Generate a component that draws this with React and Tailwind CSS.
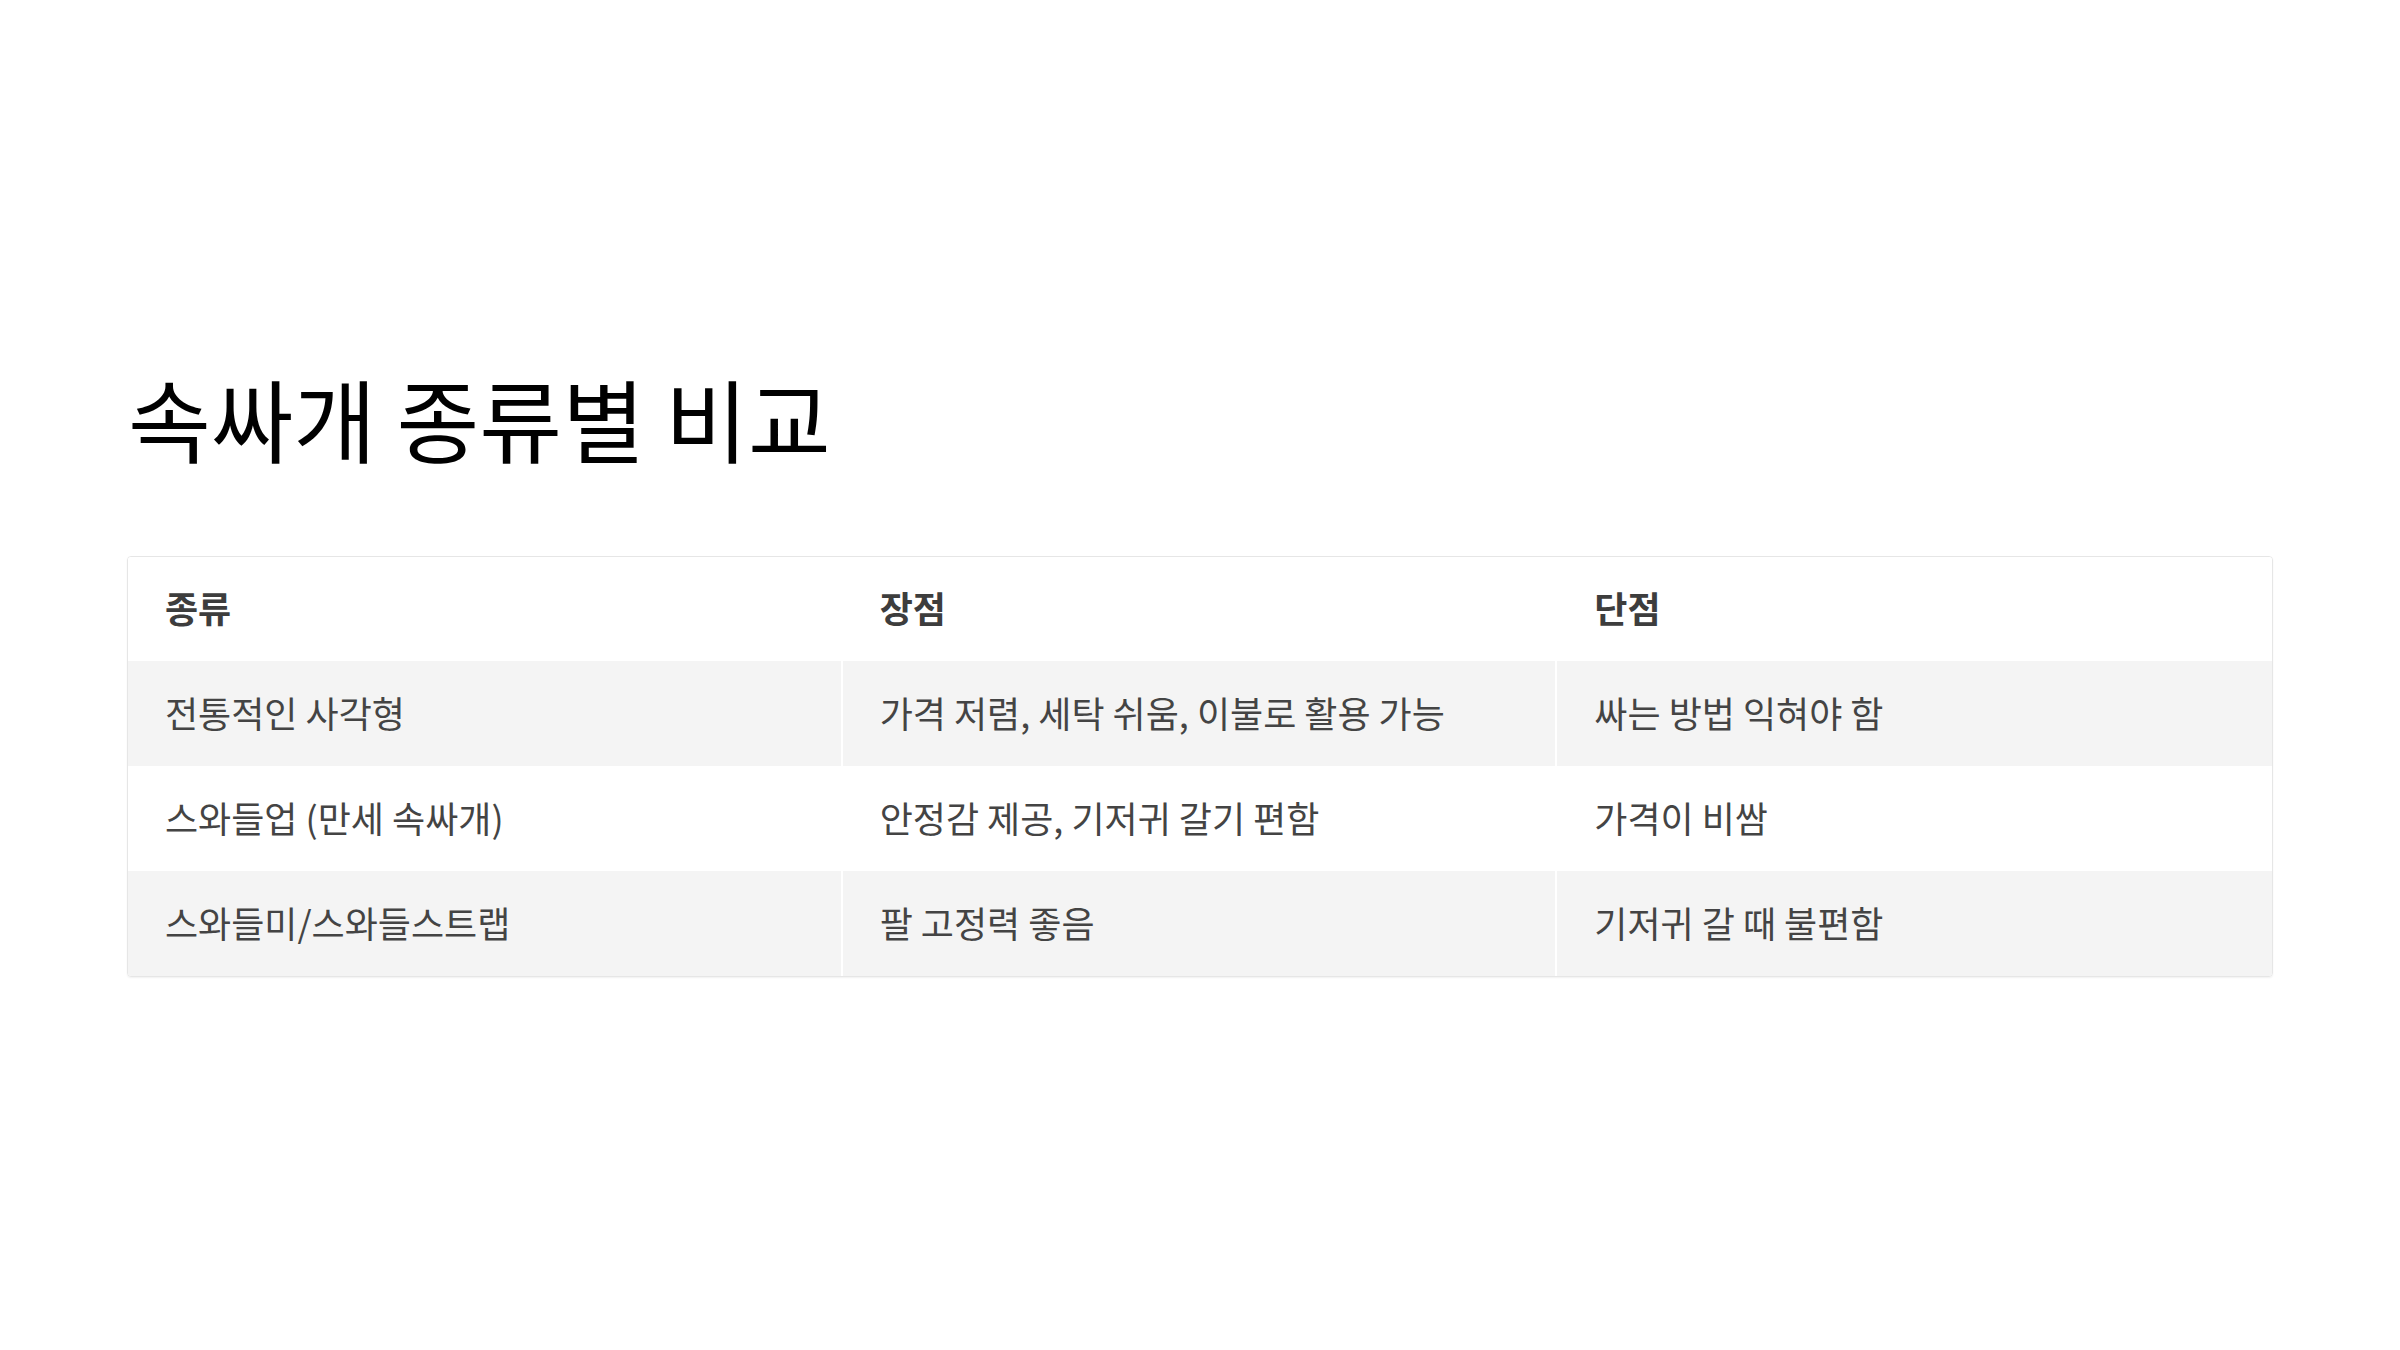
import React from 'react';

const rows = [
  ['전통적인 사각형', '가격 저렴, 세탁 쉬움, 이불로 활용 가능', '싸는 방법 익혀야 함'],
  ['스와들업 (만세 속싸개)', '안정감 제공, 기저귀 갈기 편함', '가격이 비쌈'],
  ['스와들미/스와들스트랩', '팔 고정력 좋음', '기저귀 갈 때 불편함'],
];

const font = { fontFamily: '"Noto Sans CJK KR", "Noto Sans", sans-serif' };

const App = () => {
  return (
    <div className="w-[2400px] h-[1350px] bg-white" style={font}>
      <div className="pt-[358px] px-[127px]">
        <h1 className="text-[90px] leading-[118px] font-normal text-black pl-[1px]">
          속싸개 종류별 비교
        </h1>

        <div className="mt-[80px] border border-[#e6e6e6] rounded-[4px] overflow-hidden shadow-[0_1px_2px_rgba(0,0,0,0.06)]">
          <div className="grid grid-cols-3 h-[104px] bg-white">
            {['종류', '장점', '단점'].map((h) => (
              <div key={h} className="flex items-center pl-[37px] pb-[4px] text-[36px] font-bold text-[#3d3d3d]">
                {h}
              </div>
            ))}
          </div>
          {rows.map((r, i) => (
            <div
              key={i}
              className={`grid grid-cols-3 h-[105px] ${i % 2 === 0 ? 'bg-[#f4f4f4]' : 'bg-white'}`}
            >
              {r.map((c, j) => (
                <div
                  key={j}
                  className={`flex items-center pl-[37px] pb-[4px] text-[36px] text-[#444444] ${j < 2 ? 'border-r-2 border-white' : ''}`}
                >
                  {c}
                </div>
              ))}
            </div>
          ))}
        </div>
      </div>
    </div>
  );
};

export default App;
